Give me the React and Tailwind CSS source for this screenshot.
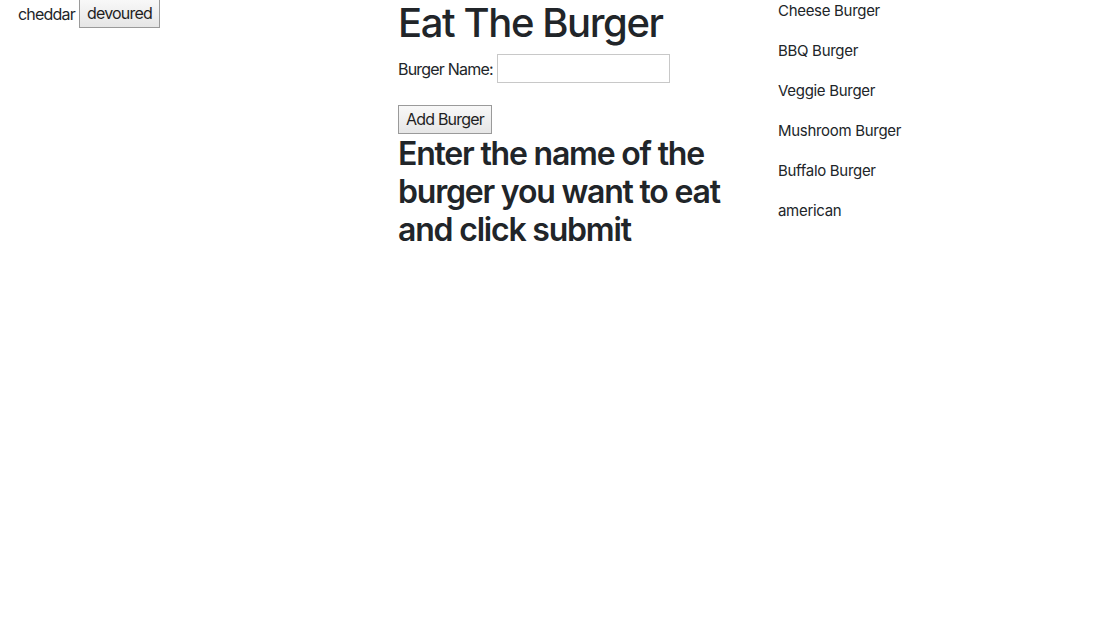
import React from 'react';

const burgers = ['Cheese Burger', 'BBQ Burger', 'Veggie Burger', 'Mushroom Burger', 'Buffalo Burger', 'american'];

const btn = 'border border-[#9a9a9a] bg-gradient-to-b from-[#f8f8f8] to-[#e6e6e6] px-[7px] leading-[27px] text-[16px] tracking-[-0.8px] text-[#1f1f1f]';

export default function App() {
  return (
    <div className="min-h-[623px] bg-white text-[#212529] font-['Inter','Liberation_Sans',sans-serif] text-[16px]">
      <div className="flex pl-[18px] -mt-[1px]">
        {/* devoured list */}
        <div className="w-[380px]">
          <div className="flex items-center gap-[4px]">
            <span className="tracking-[-0.8px]">cheddar</span>
            <button className={btn}>devoured</button>
          </div>
        </div>

        {/* form */}
        <div className="w-[380px]">
          <h1 className="text-[40px] leading-[48px] font-medium tracking-[-1.4px] mb-[7px]">Eat The Burger</h1>
          <form>
            <div className="flex items-center gap-[4px] mt-[1px]">
              <label className="tracking-[-0.8px]">Burger Name:</label>
              <input type="text" className="w-[173px] h-[29px] border border-[#c8c8c8] bg-white" />
            </div>
            <div className="mt-[22px]">
              <button type="button" className={btn}>Add Burger</button>
            </div>
          </form>
          <h2 className="text-[32px] leading-[38px] font-semibold tracking-[-1.2px] mt-[1px]">
            Enter the name of the burger you want to eat and click submit
          </h2>
        </div>

        {/* burger list */}
        <div className="w-[300px]">
          <ul className="pt-[2px]">
            {burgers.map((b) => (
              <li key={b} className="leading-[20px] mb-[20px] text-[15px] tracking-[-0.3px]">{b}</li>
            ))}
          </ul>
        </div>
      </div>
    </div>
  );
}
